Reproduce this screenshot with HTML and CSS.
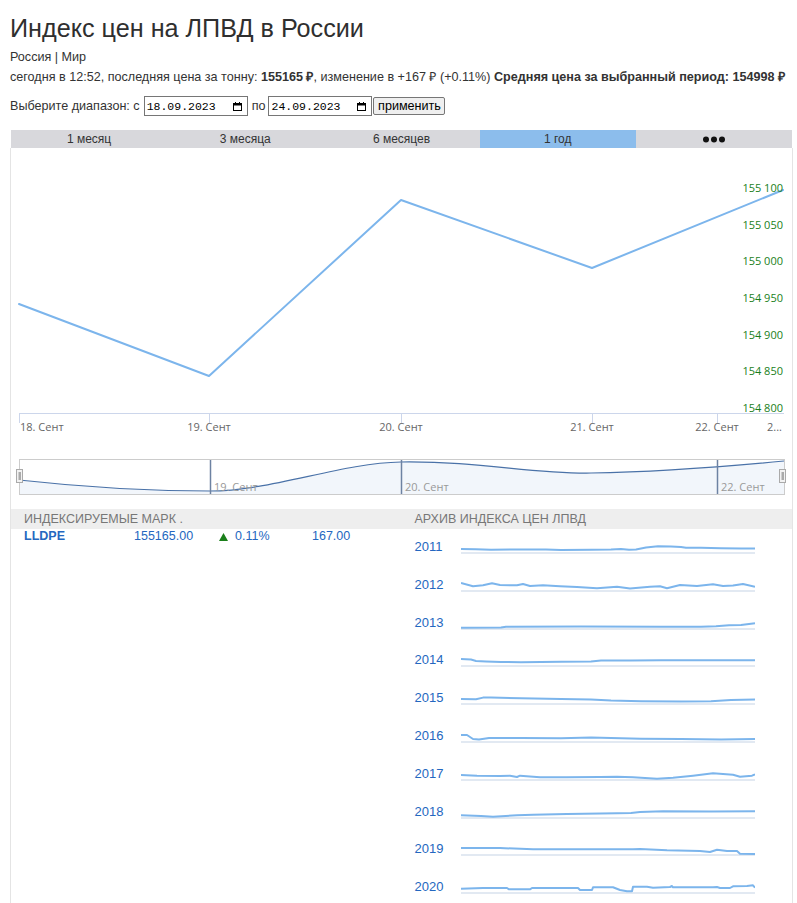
FILE: index.html
```html
<!DOCTYPE html>
<html lang="ru">
<head>
<meta charset="utf-8">
<title>Индекс цен на ЛПВД в России</title>
<link rel="stylesheet" href="styles.css">
</head>
<body>
<div class="page">
  <h1 class="title">Индекс цен на ЛПВД в России</h1>
  <div class="crumbs">Россия | Мир</div>
  <div class="summary">сегодня в 12:52, последняя цена за тонну: <b>155165 ₽</b>, изменение в +167 ₽ (+0.11%) <b>Средняя цена за выбранный период: 154998 ₽</b></div>
  <form class="range">
    <span class="range-label">Выберите диапазон: с</span>
    <span class="date"><span class="date-val">18.09.2023</span><svg class="cal" width="9" height="9" viewBox="0 0 9 9"><rect x="0.5" y="1.5" width="8" height="7" fill="none" stroke="#000"/><rect x="0.5" y="1.5" width="8" height="2" fill="#000"/><rect x="2" y="0" width="1" height="2" fill="#000"/><rect x="6" y="0" width="1" height="2" fill="#000"/></svg></span>
    <span class="range-sep">по</span>
    <span class="date"><span class="date-val">24.09.2023</span><svg class="cal" width="9" height="9" viewBox="0 0 9 9"><rect x="0.5" y="1.5" width="8" height="7" fill="none" stroke="#000"/><rect x="0.5" y="1.5" width="8" height="2" fill="#000"/><rect x="2" y="0" width="1" height="2" fill="#000"/><rect x="6" y="0" width="1" height="2" fill="#000"/></svg></span>
    <button class="apply" type="button">применить</button>
  </form>

  <div class="panel">
    <nav class="tabs">
      <span class="tab">1 месяц</span>
      <span class="tab">3 месяца</span>
      <span class="tab">6 месяцев</span>
      <span class="tab active">1 год</span>
      <span class="tab"><svg class="dots" width="22" height="7" viewBox="0 0 22 7"><circle cx="3" cy="3.5" r="3" fill="#111"/><circle cx="11" cy="3.5" r="3" fill="#111"/><circle cx="19" cy="3.5" r="3" fill="#111"/></svg></span>
    </nav>
    <div class="panel-body">
      <svg class="chart" width="781" height="361" viewBox="0 0 781 361">
        <polyline points="8,156 198,228 390,52 581,120 772,42" fill="none" stroke="#7cb5ec" stroke-width="2" stroke-linejoin="round" stroke-linecap="round"/>
        <g class="ylab" text-anchor="end">
          <text x="772" y="44">155 100</text>
          <text x="772" y="80.7">155 050</text>
          <text x="772" y="117.3">155 000</text>
          <text x="772" y="154">154 950</text>
          <text x="772" y="190.7">154 900</text>
          <text x="772" y="227.3">154 850</text>
          <text x="772" y="264">154 800</text>
        </g>
        <line x1="8" y1="265.5" x2="773" y2="265.5" stroke="#ccd6eb"/>
        <g stroke="#ccd6eb">
          <line x1="8.5" y1="265" x2="8.5" y2="275"/>
          <line x1="198.5" y1="265" x2="198.5" y2="275"/>
          <line x1="390.5" y1="265" x2="390.5" y2="275"/>
          <line x1="581.5" y1="265" x2="581.5" y2="275"/>
          <line x1="706.5" y1="265" x2="706.5" y2="275"/>
        </g>
        <g class="xlab">
          <text x="9" y="283">18. Сент</text>
          <text x="198" y="283" text-anchor="middle">19. Сент</text>
          <text x="390" y="283" text-anchor="middle">20. Сент</text>
          <text x="581" y="283" text-anchor="middle">21. Сент</text>
          <text x="706" y="283" text-anchor="middle">22. Сент</text>
          <text x="771" y="283" text-anchor="end">2...</text>
        </g>
        <!-- navigator -->
        <path d="M8,332 C80,340 150,343 199,343 C260,343 330,315 390,314 C470,313 520,326 580,325 C640,324 700,320 773,313 L773,346 L8,346 Z" fill="#f2f6fb"/>
        <path d="M8,332 C80,340 150,343 199,343 C260,343 330,315 390,314 C470,313 520,326 580,325 C640,324 700,320 773,313" fill="none" stroke="#4a72a8" stroke-width="1.2"/>
        <g stroke="#6d82a2" stroke-width="1.5">
          <line x1="199.5" y1="311" x2="199.5" y2="346"/>
          <line x1="390.5" y1="311" x2="390.5" y2="346"/>
          <line x1="706.5" y1="311" x2="706.5" y2="346"/>
        </g>
        <g class="navlab">
          <text x="203" y="343">19. Сент</text>
          <text x="394" y="343">20. Сент</text>
          <text x="710" y="343">22. Сент</text>
        </g>
        <rect x="8.5" y="311.5" width="765" height="35" fill="none" stroke="#cccccc"/>
        <rect x="5.5" y="321.5" width="6" height="13" fill="#f2f2f2" stroke="#aaa"/>
        <rect x="7.5" y="324" width="2.5" height="8" fill="#aaa"/>
        <rect x="768.5" y="321.5" width="6" height="13" fill="#f2f2f2" stroke="#aaa"/>
        <rect x="770.5" y="324" width="2.5" height="8" fill="#aaa"/>
      </svg>

      <div class="bottom">
        <section class="col">
          <h2 class="col-head">Индексируемые марк .</h2>
          <div class="quote">
            <span class="sym">LLDPE</span>
            <span>155165.00</span>
            <span class="chg"><svg class="up" width="9" height="8" viewBox="0 0 9 8"><polygon points="4.5,0 9,8 0,8" fill="#1a7f1a"/></svg>0.11%</span>
            <span>167.00</span>
          </div>
        </section>
        <section class="col">
          <h2 class="col-head">Архив индекса цен ЛПВД</h2>
          <ul class="arch">
            <li class="arch-row"><span class="year">2011</span><svg class="spark" width="294" height="16" viewBox="0 0 294 16"><line x1="0" y1="15" x2="294" y2="15" class="base"/><polyline class="sl" points="0,11 15,11.3 30,11.8 60,11.4 85,11.6 100,12 130,11.7 150,11.6 160,11.1 168,11.7 175,11.6 185,9.5 197,8.3 210,8.4 220,9 225,9.8 240,9.8 260,10.3 280,10.6 294,10.6"/></svg></li>
            <li class="arch-row"><span class="year">2012</span><svg class="spark" width="294" height="16" viewBox="0 0 294 16"><line x1="0" y1="15" x2="294" y2="15" class="base"/><polyline class="sl" points="0,7 12,10.3 22,9.3 31,7.3 39,9 56,9.3 62,8 69,10 82,9.3 99,10.3 116,11 136,12.3 156,10.7 169,12.6 189,10.7 199,10.3 206,12.3 219,9 236,10 252,8.3 262,10 272,9.6 282,8 294,10.7"/></svg></li>
            <li class="arch-row"><span class="year">2013</span><svg class="spark" width="294" height="16" viewBox="0 0 294 16"><line x1="0" y1="15" x2="294" y2="15" class="base"/><polyline class="sl" points="0,13.7 40,13.6 45,12.8 120,12.6 200,12.8 240,12.8 255,12.3 268,11.3 280,11 290,9.8 294,9.3"/></svg></li>
            <li class="arch-row"><span class="year">2014</span><svg class="spark" width="294" height="16" viewBox="0 0 294 16"><line x1="0" y1="15" x2="294" y2="15" class="base"/><polyline class="sl" points="0,8 10,8.5 15,10 25,10.5 40,11 60,11.2 100,10.8 130,10.5 140,9.6 170,9.5 200,9.3 230,9.3 260,9.2 294,9.3"/></svg></li>
            <li class="arch-row"><span class="year">2015</span><svg class="spark" width="294" height="16" viewBox="0 0 294 16"><line x1="0" y1="15" x2="294" y2="15" class="base"/><polyline class="sl" points="0,10 15,10.3 22,8.6 30,8.6 60,9.3 100,10 130,10.5 150,11.5 180,12.2 220,12.5 250,12.2 270,11 294,10.5"/></svg></li>
            <li class="arch-row"><span class="year">2016</span><svg class="spark" width="294" height="16" viewBox="0 0 294 16"><line x1="0" y1="15" x2="294" y2="15" class="base"/><polyline class="sl" points="0,8 6,8 12,12 18,12.5 28,11 60,11 100,11.3 130,10.5 150,11 180,11.7 220,12 260,12.4 294,12"/></svg></li>
            <li class="arch-row"><span class="year">2017</span><svg class="spark" width="294" height="16" viewBox="0 0 294 16"><line x1="0" y1="15" x2="294" y2="15" class="base"/><polyline class="sl" points="0,10 16,10.7 39,11 49,10.7 56,12 59,10.7 79,12.3 106,12.3 139,12 156,11.7 172,12.3 196,13.7 212,12.7 232,10.7 252,8.3 272,9.7 279,11.7 291,10.7 294,9.3"/></svg></li>
            <li class="arch-row"><span class="year">2018</span><svg class="spark" width="294" height="16" viewBox="0 0 294 16"><line x1="0" y1="15" x2="294" y2="15" class="base"/><polyline class="sl" points="0,12.3 20,13 32,13.7 56,12.3 72,11.7 106,11 156,10.3 170,10 179,9 202,8.3 250,8.5 294,8.3"/></svg></li>
            <li class="arch-row"><span class="year">2019</span><svg class="spark" width="294" height="16" viewBox="0 0 294 16"><line x1="0" y1="15" x2="294" y2="15" class="base"/><polyline class="sl" points="0,8 39,8 72,9.3 172,9.3 179,9 206,10.3 239,11 249,12 256,9.7 266,11 276,11 279,13.7 294,14"/></svg></li>
            <li class="arch-row"><span class="year">2020</span><svg class="spark" width="294" height="16" viewBox="0 0 294 16"><line x1="0" y1="15" x2="294" y2="15" class="base"/><polyline class="sl" points="0,10.7 22,10 46,10 48,11.3 69,11.3 71,10 117,10 119,12 131,12 132,9.3 152,9.3 159,12 166,13.3 171,13.3 172,8.7 186,8.7 192,9.7 209,9 211,8 212,9.3 252,9.3 256,9 259,10 269,10 272,8.3 286,8 292,7.3 294,9.7"/></svg></li>
          </ul>
        </section>
      </div>
    </div>
  </div>
</div>
</body>
</html>
```

FILE: styles.css
```css
html, body {
  margin: 0;
  padding: 0;
}
html {
  overflow: hidden;
}
body {
  font-family: "Liberation Sans", Arial, sans-serif;
  font-size: 12.6px;
  color: #333;
  background: #fff;
}
.page {
  padding: 0 4px 0 10px;
}
.title {
  margin: 13px 0 0;
  font-size: 25.2px;
  line-height: 30px;
  font-weight: normal;
  color: #2f2f2f;
}
.crumbs {
  margin-top: 4px;
  line-height: 20px;
}
.summary {
  line-height: 20px;
  white-space: nowrap;
}
.summary b {
  font-weight: bold;
}
.range {
  display: flex;
  align-items: center;
  height: 20px;
  margin: 9px 0 0;
}
.range-label {
  margin-right: 4px;
}
.date {
  display: flex;
  align-items: center;
  justify-content: space-between;
  box-sizing: border-box;
  width: 104px;
  height: 20px;
  padding: 0 5px 0 2px;
  border: 1px solid #767676;
  background: #fff;
  font-family: "Liberation Mono", "DejaVu Sans Mono", monospace;
  font-size: 11.5px;
  color: #000;
}
.cal {
  display: block;
}
.range-sep {
  margin: 0 3px 0 4px;
}
.apply {
  box-sizing: border-box;
  width: 72px;
  height: 18px;
  margin-left: 1px;
  padding: 0;
  border: 1px solid #767676;
  border-radius: 2px;
  background: #efefef;
  font-family: "Liberation Sans", Arial, sans-serif;
  font-size: 12.6px;
  color: #000;
}
.panel {
  margin-top: 14px;
}
.tabs {
  display: grid;
  grid-template-columns: repeat(5, 1fr);
  height: 18px;
  margin: 0 1px;
  background: #d8d8dc;
  font-size: 12px;
}
.tab {
  display: flex;
  align-items: center;
  justify-content: center;
  line-height: 18px;
  color: #333;
}
.tab.active {
  background: #8cbdec;
}
.dots {
  display: block;
}
.panel-body {
  border-left: 1px solid #e4e4e4;
  border-right: 1px solid #e4e4e4;
  min-height: 780px;
}
.chart {
  display: block;
}
.ylab text {
  font-family: "Open Sans", "DejaVu Sans", sans-serif;
  font-size: 11px;
  fill: #1a7f1a;
}
.xlab text {
  font-family: "Open Sans", "DejaVu Sans", sans-serif;
  font-size: 11px;
  fill: #666;
}
.navlab text {
  font-family: "Open Sans", "DejaVu Sans", sans-serif;
  font-size: 11px;
  fill: #999;
}
.bottom {
  display: grid;
  grid-template-columns: 1fr 1fr;
}
.col-head {
  margin: 0;
  height: 20px;
  padding-left: 13px;
  background: #eeeeee;
  font-size: 12.5px;
  line-height: 20px;
  font-weight: normal;
  text-transform: uppercase;
  color: #777;
}
.quote {
  display: grid;
  grid-template-columns: 110px 85px 93px auto;
  padding-left: 13px;
  line-height: 15px;
  font-size: 12.5px;
  color: #2467c0;
}
.quote .sym {
  font-weight: bold;
}
.chg {
  display: flex;
  align-items: center;
}
.up {
  display: block;
  margin-right: 7px;
}
.arch {
  list-style: none;
  margin: 0;
  padding: 0 0 0 13px;
}
.arch-row {
  display: flex;
  align-items: flex-start;
  box-sizing: border-box;
  height: 37.8px;
  padding-top: 9px;
}
.year {
  width: 46px;
  line-height: 17px;
  font-size: 13px;
  color: #2467c0;
}
.spark {
  display: block;
}
.spark .base {
  stroke: #d8e2ee;
  stroke-width: 1.5;
}
.spark .sl {
  fill: none;
  stroke: #7cb5ec;
  stroke-width: 2;
  stroke-linejoin: round;
}
```
